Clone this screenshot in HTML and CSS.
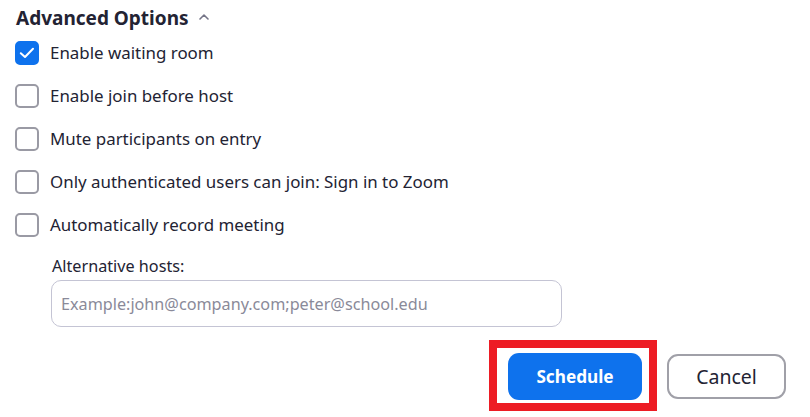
FILE: index.html
```html
<!DOCTYPE html>
<html>
<head>
<meta charset="utf-8">
<link rel="stylesheet" href="styles.css">
</head>
<body>
<div class="panel">
  <div class="heading">
    <span>Advanced Options</span>
    <svg class="caret" width="10" height="7" viewBox="0 0 10 7"><path d="M1 6 L5 2 L9 6" fill="none" stroke="#747487" stroke-width="1.6" stroke-linecap="round" stroke-linejoin="round"/></svg>
  </div>
  <div class="options">
    <label class="opt"><span class="box checked"><svg width="24" height="24" viewBox="0 0 24 24"><path d="M5.8 12.2 L10 16 L18 7.8" fill="none" stroke="#fff" stroke-width="2" stroke-linecap="round" stroke-linejoin="round"/></svg></span><span>Enable waiting room</span></label>
    <label class="opt"><span class="box"></span><span>Enable join before host</span></label>
    <label class="opt"><span class="box"></span><span>Mute participants on entry</span></label>
    <label class="opt"><span class="box"></span><span>Only authenticated users can join: Sign in to Zoom</span></label>
    <label class="opt"><span class="box"></span><span>Automatically record meeting</span></label>
  </div>
  <div class="alt">
    <div class="alt-label">Alternative hosts:</div>
    <div class="input">Example:john@company.com;peter@school.edu</div>
  </div>
  <div class="actions">
    <div class="highlight">
      <button class="btn primary">Schedule</button>
    </div>
    <button class="btn secondary">Cancel</button>
  </div>
</div>
</body>
</html>
```
FILE: styles.css
```css
* { box-sizing: border-box; }
html, body {
  margin: 0;
  padding: 0;
  background: #ffffff;
  width: 810px;
  height: 417px;
  overflow: hidden;
}
body {
  font-family: "Noto Sans", "Open Sans", sans-serif;
  color: #232333;
}
.panel {
  display: flex;
  flex-direction: column;
}
.heading {
  height: 31px;
  padding-left: 16px;
  display: flex;
  align-items: center;
  gap: 10px;
  font-size: 19px;
  font-weight: 700;
  padding-top: 4px;
}
.caret { margin-top: -2px; }
.options {
  display: flex;
  flex-direction: column;
}
.opt {
  height: 43px;
  display: flex;
  align-items: center;
  gap: 11px;
  padding-left: 15px;
  font-size: 16.9px;
}
.box {
  width: 24px;
  height: 24px;
  border: 2px solid #9a9aa4;
  border-radius: 5px;
  flex: none;
  display: flex;
  align-items: center;
  justify-content: center;
}
.box.checked {
  background: #0e72ed;
  border-color: #0e72ed;
}
.box.checked svg { flex: none; }
.alt {
  padding-left: 51px;
  display: flex;
  flex-direction: column;
}
.alt-label {
  margin-top: 7px;
  height: 27px;
  line-height: 27px;
  padding-left: 1px;
  font-size: 16.2px;
}
.input {
  width: 511px;
  height: 47px;
  border: 1.5px solid #c4c4d4;
  border-radius: 10px;
  display: flex;
  align-items: center;
  padding-left: 9px;
  color: #8a8a99;
  font-size: 16.2px;
}
.actions {
  margin-top: 13px;
  display: flex;
  justify-content: flex-end;
  align-items: center;
  gap: 10px;
  padding-right: 24px;
}
.highlight {
  width: 168px;
  height: 71px;
  border: 8px solid #ed1c24;
  padding: 5px 7px 3px 11px;
  display: flex;
}
.btn {
  font-family: "Noto Sans", "Open Sans", sans-serif;
  border-radius: 11px;
  cursor: pointer;
}
.primary {
  width: 134px;
  height: 47px;
  background: #0e72ed;
  border: none;
  color: #ffffff;
  font-weight: 700;
  font-size: 17.2px;
}
.secondary {
  width: 119px;
  height: 45px;
  background: #ffffff;
  border: 2px solid #a0a0a8;
  color: #232333;
  font-size: 19.5px;
  margin-top: 2px;
}
```
